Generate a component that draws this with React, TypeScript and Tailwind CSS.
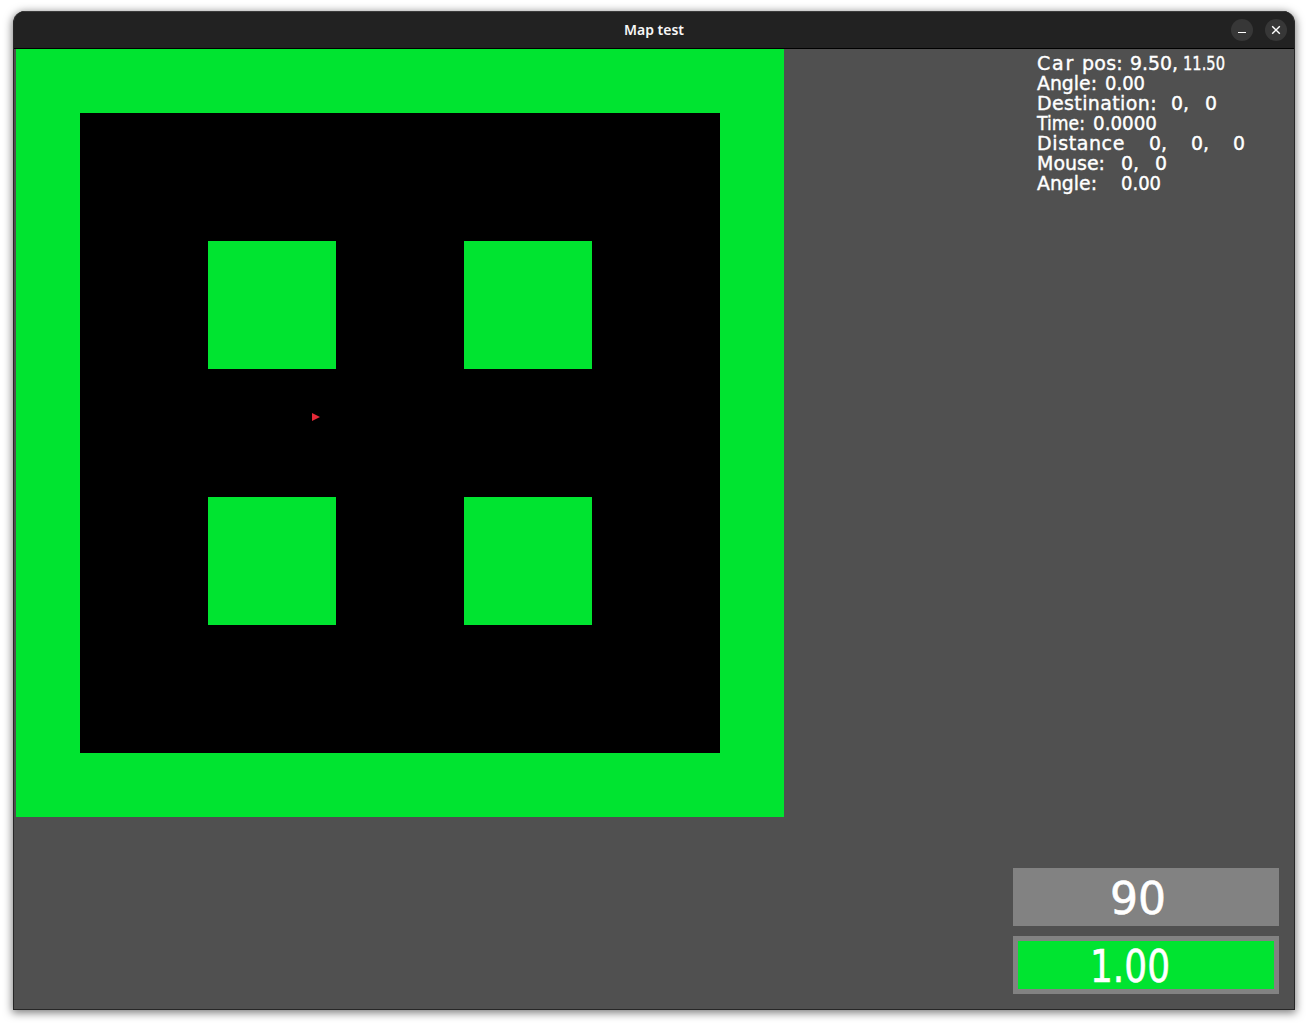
import { useLayoutEffect, useRef } from "react";

// Makes a word take exactly `width` pixels: letters are spread apart when
// there is room to spare, and condensed when there is too little.
function Word({ text, width, gap = 0 }: { text: string; width: number; gap?: number }) {
  const ref = useRef<HTMLSpanElement>(null);
  useLayoutEffect(() => {
    const el = ref.current;
    if (!el) return;
    el.style.letterSpacing = "0px";
    el.style.transform = "none";
    const natural = el.getBoundingClientRect().width;
    if (natural > width) {
      el.style.transform = `scaleX(${width / natural})`;
    } else {
      el.style.letterSpacing = `${(width - natural) / text.length}px`;
    }
  }, [text, width]);
  return (
    <span className="block shrink-0" style={{ width, marginLeft: gap }}>
      <span ref={ref} className="inline-block origin-left whitespace-pre">{text}</span>
    </span>
  );
}

type Item = [text: string, width: number, gap?: number];

const readout: Item[][] = [
  [["Car", 38], ["pos:", 41, 7], ["9.50,", 48, 7], ["11.50", 42, 5]],
  [["Angle:", 60], ["0.00", 40, 8]],
  [["Destination:", 120], ["0,", 18, 14], ["0", 12, 16]],
  [["Time:", 48], ["0.0000", 64, 8]],
  [["Distance", 88], ["0,", 18, 24], ["0,", 18, 24], ["0", 12, 24]],
  [["Mouse:", 68], ["0,", 18, 16], ["0", 12, 16]],
  [["Angle:", 60], ["0.00", 40, 24]],
];

const tiles = [
  "GGGGGGGGGGGG",
  "G..........G",
  "G..........G",
  "G..GG..GG..G",
  "G..GG..GG..G",
  "G..........G",
  "G..........G",
  "G..GG..GG..G",
  "G..GG..GG..G",
  "G..........G",
  "G..........G",
  "GGGGGGGGGGGG",
];

function TitleBar() {
  return (
    <div className="grid h-[37px] grid-cols-[1fr_auto_1fr] items-center border-t border-[#3c3c3c] bg-[#222222] px-[7px]">
      <span />
      <div className="pb-[2px] text-[14.5px] leading-5 font-semibold text-[#f7f7f7] [font-family:'Noto_Sans',sans-serif]">
        <Word text="Map test" width={60} />
      </div>
      <div className="flex justify-end gap-3">
        <span className="flex size-[22px] items-center justify-center rounded-full bg-[#373737]">
          <svg width="22" height="22" viewBox="0 0 22 22" shapeRendering="crispEdges">
            <path d="M7 13.5h8" stroke="#fff" strokeWidth="1" />
          </svg>
        </span>
        <span className="flex size-[22px] items-center justify-center rounded-full bg-[#373737]">
          <svg width="22" height="22" viewBox="0 0 22 22">
            <path d="M7.2 7.2l7.6 7.6M14.8 7.2l-7.6 7.6" stroke="#fff" strokeWidth="1.4" />
          </svg>
        </span>
      </div>
    </div>
  );
}

function TileMap() {
  return (
    <div className="relative ml-0.5 grid size-[768px] shrink-0 grid-cols-12 grid-rows-12 bg-black">
      {tiles.flatMap((row, y) =>
        [...row].map((tile, x) => (
          <div key={`${x}-${y}`} className={tile === "G" ? "bg-[#00e430]" : "bg-black"} />
        )),
      )}
      <svg className="absolute top-[364px] left-[296px]" width="8" height="8" viewBox="0 0 8 8">
        <path d="M0 0L8 4L0 8Z" fill="#e62937" />
      </svg>
    </div>
  );
}

export default function App() {
  return (
    <div className="h-[1026px] w-[1308px] overflow-hidden bg-white pt-[11px] pl-[13px]">
      <div className="h-[999px] w-[1282px] overflow-hidden rounded-t-[12px] border-x border-b border-[#272727] bg-[#505050] shadow-[0_2px_9px_1px_rgba(0,0,0,0.5)]">
        <TitleBar />
        <div className="h-px bg-black" />
        <main className="flex h-[960px] justify-between text-white [font-family:'DejaVu_Sans',sans-serif]">
          <TileMap />
          <aside className="flex w-[295px] flex-col justify-between pt-1 pb-[15px]">
            <div className="pl-[38px] text-[19px] leading-5 [-webkit-text-stroke:0.4px_white]">
              {readout.map((line, i) => (
                <div key={i} className="flex h-5">
                  {line.map(([text, width, gap], j) => (
                    <Word key={j} text={text} width={width} gap={gap} />
                  ))}
                </div>
              ))}
            </div>
            <div className="flex flex-col gap-2.5 pl-3.5 text-[44px] leading-[61px] [-webkit-text-stroke:0.6px_white]">
              <div className="flex h-[58px] w-[266px] bg-[#828282] pl-[97px]">
                <Word text="90" width={56} />
              </div>
              <div className="flex h-[58px] w-[266px] border-[5px] border-[#828282] bg-[#00e430] pl-[72px] leading-[51px]">
                <Word text="1.00" width={80} />
              </div>
            </div>
          </aside>
        </main>
      </div>
    </div>
  );
}
